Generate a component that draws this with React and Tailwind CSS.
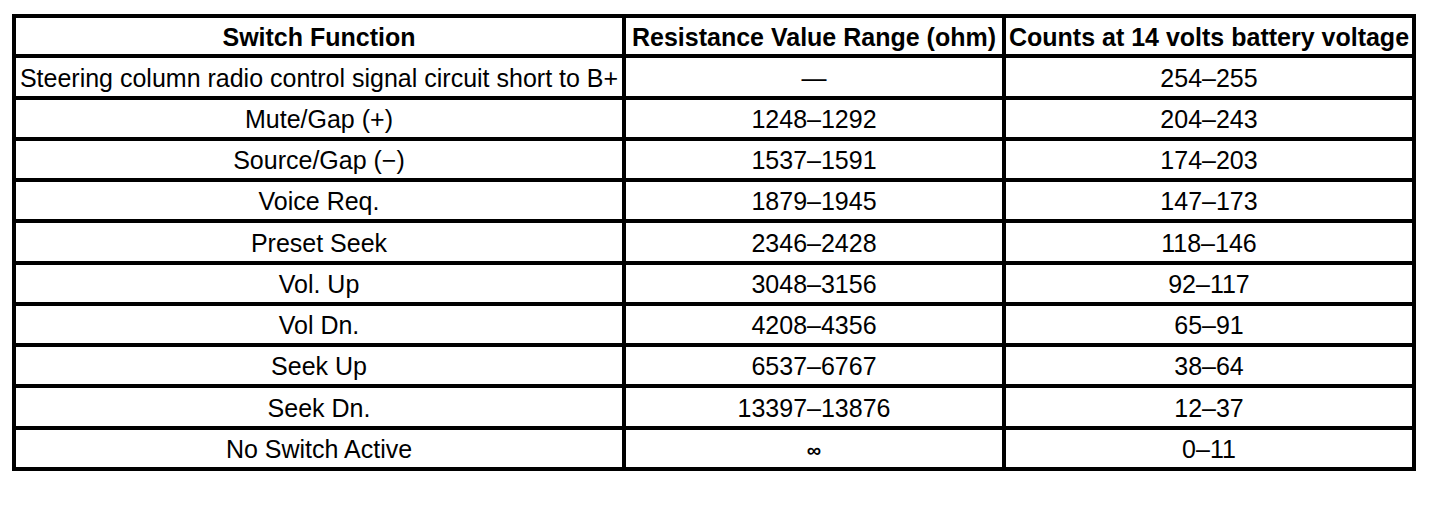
const rows = [
  ["Steering column radio control signal circuit short to B+", "—", "254–255"],
  ["Mute/Gap (+)", "1248–1292", "204–243"],
  ["Source/Gap (−)", "1537–1591", "174–203"],
  ["Voice Req.", "1879–1945", "147–173"],
  ["Preset Seek", "2346–2428", "118–146"],
  ["Vol. Up", "3048–3156", "92–117"],
  ["Vol Dn.", "4208–4356", "65–91"],
  ["Seek Up", "6537–6767", "38–64"],
  ["Seek Dn.", "13397–13876", "12–37"],
  ["No Switch Active", "∞", "0–11"],
];

export default function App() {
  return (
    <div
      className="w-[1456px] h-[506px] bg-white text-black pl-[12px] pt-[14px]"
      style={{ fontFamily: '"Liberation Sans", Arial, sans-serif' }}
    >
      <div className="grid grid-cols-[606px_376px_406px] grid-rows-[36px_38px_37px_37px_37px_38px_37px_37px_37px_38px_37px] gap-[4px] p-[4px] bg-black w-[1404px]">
        {/* Header */}
        <div className="bg-white flex items-center justify-center pt-[3px] font-bold text-[25px] whitespace-nowrap">
          Switch Function
        </div>
        <div className="bg-white flex items-center justify-center pt-[3px] font-bold text-[25px] whitespace-nowrap">
          Resistance Value Range (ohm)
        </div>
        <div className="bg-white flex items-center justify-center pt-[3px] font-bold text-[25px] whitespace-nowrap">
          Counts at 14 volts battery voltage
        </div>

        {rows.map((r, i) => [
          <div key={i + "a"} className="bg-white flex items-center justify-center pt-[3px] text-[25px] whitespace-nowrap">
            {r[0]}
          </div>,
          <div
            key={i + "b"}
            className={
              r[1] === "∞"
                ? "bg-white flex items-center justify-center pt-[3px] text-[20px] font-bold whitespace-nowrap"
                : "bg-white flex items-center justify-center pt-[3px] text-[25px] whitespace-nowrap"
            }
          >
            {r[1]}
          </div>,
          <div key={i + "c"} className="bg-white flex items-center justify-center pt-[3px] text-[25px] whitespace-nowrap">
            {r[2]}
          </div>,
        ])}
      </div>
    </div>
  );
}
